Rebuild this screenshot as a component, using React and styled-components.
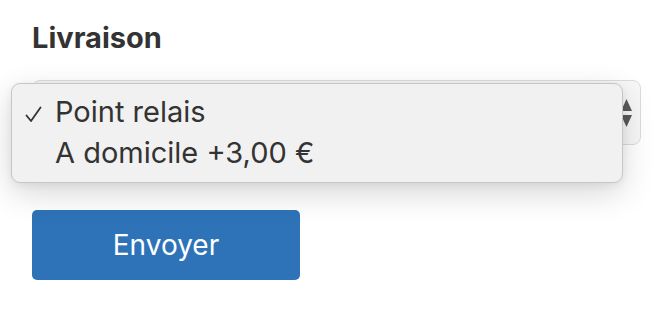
import React from 'react';
import styled, { createGlobalStyle } from 'styled-components';

const Global = createGlobalStyle`
  html, body { margin: 0; padding: 0; background: #ffffff; }
  body { font-family: Inter, "Liberation Sans", Arial, sans-serif; }
`;

const Page = styled.div`
  box-sizing: border-box;
  width: 660px;
  height: 320px;
  padding: 20px 19px 0 32px;
  display: flex;
  flex-direction: column;
  align-items: flex-start;
`;

const Label = styled.div`
  font-size: 29px;
  font-weight: 700;
  line-height: 36px;
  color: #333333;
`;

const Field = styled.div`
  position: relative;
  margin-top: 24px;
  width: 609px;
  height: 65px;
`;

const SelectBox = styled.div`
  box-sizing: border-box;
  width: 100%;
  height: 100%;
  border: 1px solid #dcdcdc;
  border-radius: 8px;
  background: #f7f7f7;
  display: flex;
  align-items: center;
  justify-content: flex-end;
  padding-right: 8px;
`;

const Arrows = styled.svg`
  display: block;
`;

const Popup = styled.div`
  position: absolute;
  left: -21px;
  top: 3px;
  box-sizing: border-box;
  width: 612px;
  height: 100px;
  padding-top: 7px;
  background: #f1f1f1;
  border: 1px solid #c6c6c6;
  border-radius: 9px;
  box-shadow: 0 10px 32px rgba(0, 0, 0, 0.16), 0 2px 8px rgba(0, 0, 0, 0.06);
`;

const Option = styled.div`
  position: relative;
  height: 41px;
  line-height: 41px;
  padding-left: 43px;
  font-size: 29px;
  color: #333333;
  white-space: nowrap;
`;

const Check = styled.svg`
  position: absolute;
  left: 13px;
  top: 15px;
`;

const Button = styled.button`
  margin-top: 65px;
  width: 268px;
  height: 70px;
  border: none;
  border-radius: 5px;
  background: #2e73b8;
  color: #ffffff;
  font-family: Inter, "Liberation Sans", Arial, sans-serif;
  font-size: 28px;
  display: flex;
  align-items: center;
  justify-content: center;
  padding: 0;
`;

const options = [
  { label: 'Point relais', selected: true },
  { label: 'A domicile +3,00 €', selected: false },
];

export default function App() {
  return (
    <>
      <Global />
      <Page>
        <Label>Livraison</Label>
        <Field>
          <SelectBox>
            <Arrows width="11" height="28" viewBox="0 0 11 28">
              <path d="M5.5 0 L11 12 L0 12 Z" fill="#5a5a5a" />
              <path d="M0 16 L11 16 L5.5 28 Z" fill="#5a5a5a" />
            </Arrows>
          </SelectBox>
          <Popup>
            {options.map((o) => (
              <Option key={o.label}>
                {o.selected && (
                  <Check width="17" height="17" viewBox="0 0 17 17">
                    <path d="M1.5 9.5 L6 15 L15.5 1.5" fill="none" stroke="#333" strokeWidth="1.8" strokeLinecap="round" strokeLinejoin="round" />
                  </Check>
                )}
                {o.label}
              </Option>
            ))}
          </Popup>
        </Field>
        <Button>Envoyer</Button>
      </Page>
    </>
  );
}
